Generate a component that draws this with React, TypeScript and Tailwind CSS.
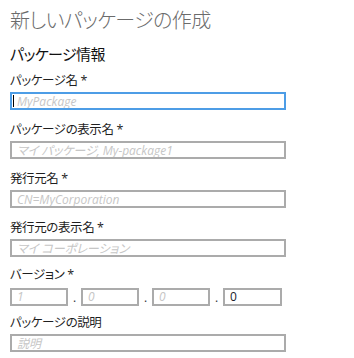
import { ReactNode } from "react";

const FONT = "font-['Open_Sans','Noto_Sans_CJK_JP',sans-serif] [font-feature-settings:'palt']";

function Field({ label, children, top }: { label: string; children: ReactNode; top: string }) {
  return (
    <div className={top}>
      <p className="text-[12.5px] leading-[18px] tracking-[-0.4px] text-[#1f1f1f]">{label}</p>
      <div className="mt-[2px]">{children}</div>
    </div>
  );
}

function TextBox({ placeholder, focused = false, width = "w-[276px]", value }: { placeholder?: string; focused?: boolean; width?: string; value?: string }) {
  return (
    <div className={`relative h-[18px] ${width}`}>
      <input
        readOnly
        value={value ?? ""}
        placeholder={placeholder}
        className={`block h-full w-full border-2 bg-white pl-[5px] text-[12px] leading-[14px] outline-none ${FONT} ${
          focused ? "border-[#4d9de6]" : "border-[#ababab]"
        } ${value ? "pl-[3px] text-[10px] not-italic text-[#1a1a2a]" : "italic"} placeholder:text-[#c6c6c6] placeholder:italic`}
      />
      {focused ? <span className="absolute left-[3px] top-[3px] h-[12px] w-px bg-black" /> : null}
    </div>
  );
}

function Dot() {
  return <span className="w-[13px] pt-[3px] text-center text-[12px] leading-[18px] text-[#333]">.</span>;
}

export default function App() {
  return (
    <div className={`h-[358px] w-[354px] bg-white px-[10px] pt-[7px] ${FONT}`}>
      <h1 className="text-[20px] font-light leading-[28px] tracking-[-0.6px] text-[#6b6b6b]">新しいパッケージの作成</h1>
      <h2 className="mt-[9px] text-[15px] font-normal leading-[20px] tracking-[-0.6px] text-[#111]">パッケージ情報</h2>

      <Field label="パッケージ名 *" top="mt-[8px]">
        <TextBox placeholder="MyPackage" focused />
      </Field>
      <Field label="パッケージの表示名 *" top="mt-[11px]">
        <TextBox placeholder="マイ パッケージ, My-package1" />
      </Field>
      <Field label="発行元名 *" top="mt-[11px]">
        <TextBox placeholder="CN=MyCorporation" />
      </Field>
      <Field label="発行元の表示名 *" top="mt-[11px]">
        <TextBox placeholder="マイ コーポレーション" />
      </Field>
      <Field label="バージョン *" top="mt-[9px]">
        <div className="flex items-center">
          <TextBox placeholder="1" width="w-[58px]" />
          <Dot />
          <TextBox placeholder="0" width="w-[58px]" />
          <Dot />
          <TextBox placeholder="0" width="w-[58px]" />
          <Dot />
          <TextBox value="0" width="w-[59px]" />
        </div>
      </Field>
      <Field label="パッケージの説明" top="mt-[7px]">
        <TextBox placeholder="説明" />
      </Field>
    </div>
  );
}
